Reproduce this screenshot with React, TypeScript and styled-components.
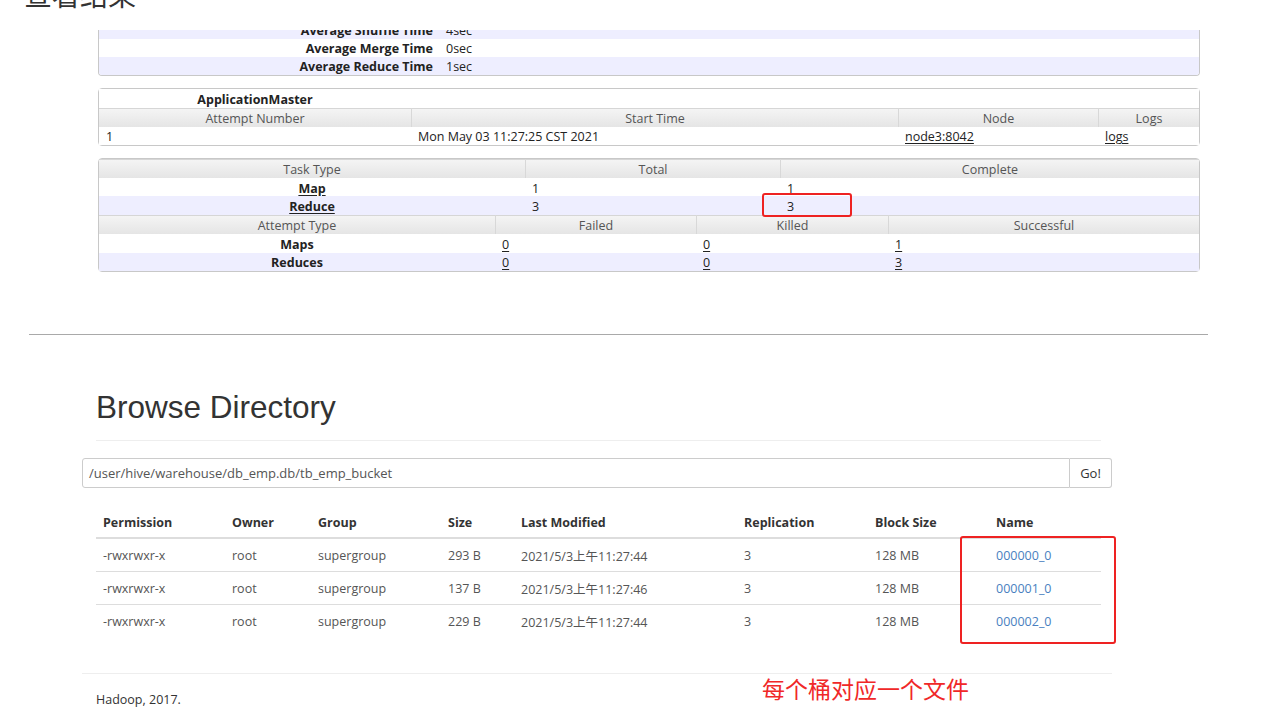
import React from "react";
import styled, { createGlobalStyle } from "styled-components";

const GlobalStyle = createGlobalStyle`
  *, *::before, *::after {
    box-sizing: border-box;
  }
  html, body {
    margin: 0;
    padding: 0;
    background: #fff;
  }
  body {
    font-family: "Open Sans", "Noto Sans", "Noto Sans CJK SC", sans-serif;
    color: #222;
  }
`;

const Page = styled.div`
  width: 1274px;
  height: 726px;
  overflow: hidden;
  position: relative;
`;

const TitleClip = styled.div`
  height: 9px;
  overflow: hidden;
  display: flex;
  align-items: flex-end;
  padding-left: 24px;
`;

const Title = styled.div`
  font-family: "Noto Sans CJK SC", sans-serif;
  font-size: 28px;
  line-height: 28px;
  color: #333;
  margin-bottom: 1px;
`;

/* ---------- hadoop job tables ---------- */

const JobArea = styled.div`
  padding-left: 98px;
  width: 1200px;
  display: flex;
  flex-direction: column;
`;

const SummaryClip = styled.div`
  margin-top: 21px;
  height: 46px;
  overflow: hidden;
  border: 1px solid #c8c8c8;
  border-top: none;
  border-radius: 0 0 4px 4px;
`;

const SummaryInner = styled.div`
  margin-top: -9px;
`;

const Grid = styled.div<{ cols: string; alt?: boolean; h?: number; pt?: number }>`
  display: grid;
  grid-template-columns: ${({ cols }) => cols};
  height: ${({ h = 19 }) => h}px;
  font-size: 12.5px;
  background: ${({ alt }) => (alt ? "#eeeeff" : "#fff")};

  & > * {
    padding-top: ${({ pt = 3 }) => pt}px;
    line-height: ${({ h = 19, pt = 3 }) => h - pt}px;
  }
`;

const Label = styled.div`
  font-weight: 700;
  text-align: right;
  padding-right: 6px;
  color: #222;
`;

const Value = styled.div`
  padding-left: 7px;
  color: #222;
`;

const Box = styled.div<{ top: number }>`
  margin-top: ${({ top }) => top}px;
  border: 1px solid #c8c8c8;
  border-radius: 4px;
  position: relative;
`;

const HeadRow = styled(Grid)`
  background: linear-gradient(#f5f5f5, #e5e5e5);
  box-shadow: inset 0 1px 0 #d6d6d6;
  color: #555;
`;

const HeadCell = styled.div`
  text-align: center;
  border-left: 1px solid #d8d8d8;
  &:first-child {
    border-left: none;
  }
`;

const Cell = styled.div<{ center?: boolean; bold?: boolean }>`
  text-align: ${({ center }) => (center ? "center" : "left")};
  padding-left: ${({ center }) => (center ? 0 : 7)}px;
  font-weight: ${({ bold }) => (bold ? 700 : 400)};
  color: #222;
  white-space: nowrap;
`;

const U = styled.span`
  text-decoration: underline;
  text-underline-offset: 2px;
`;

const RedMark = styled.div`
  position: absolute;
  border: 2px solid #ee2222;
  border-radius: 3px;
`;

/* ---------- browse directory ---------- */

const Rule = styled.div`
  margin: 62px 0 0 29px;
  width: 1179px;
  height: 1px;
  background: #a9a9a9;
`;

const Browse = styled.div`
  position: relative;
  padding: 54px 0 0 82px;
  width: 1112px;
`;

const H1 = styled.h1`
  margin: 0 0 0 14px;
  font-family: "Liberation Sans", Arial, sans-serif;
  font-weight: 400;
  font-size: 31.5px;
  line-height: 36px;
  color: #333;
  width: 1005px;
  padding-bottom: 15px;
  border-bottom: 1px solid #eee;
`;

const PathBar = styled.div`
  margin-top: 17px;
  display: flex;
  height: 30px;
`;

const PathInput = styled.div`
  flex: 1;
  border: 1px solid #ccc;
  border-radius: 3px 0 0 3px;
  padding-left: 6px;
  font-size: 13px;
  line-height: 28px;
  color: #555;
`;

const GoButton = styled.div`
  width: 42px;
  border: 1px solid #ccc;
  border-left: none;
  border-radius: 0 3px 3px 0;
  text-align: center;
  font-size: 13px;
  line-height: 28px;
  color: #333;
`;

const Table = styled.div`
  margin: 19px 0 0 14px;
  width: 1005px;
`;

const COLS = "129px 86px 130px 73px 223px 131px 121px 112px";

const TRow = styled.div<{ head?: boolean; last?: boolean }>`
  display: grid;
  grid-template-columns: ${COLS};
  height: ${({ head }) => (head ? 32 : 33)}px;
  align-items: center;
  border-bottom: ${({ head, last }) =>
    head ? "2px solid #ddd" : last ? "none" : "1px solid #ddd"};
  font-size: 12.5px;
  font-weight: ${({ head }) => (head ? 700 : 400)};
  color: ${({ head }) => (head ? "#333" : "#555")};
`;

const TCell = styled.div`
  padding-left: 7px;
  white-space: nowrap;
`;

const Link = styled.span`
  color: #4a7fc0;
`;

const FooterRule = styled.div`
  margin-top: 35px;
  height: 1px;
  background: #eee;
`;

const Footer = styled.div`
  margin: 17px 0 0 14px;
  font-size: 12.5px;
  color: #333;
`;

const Note = styled.div`
  position: absolute;
  left: 762px;
  top: 337px;
  font-family: "Noto Sans CJK SC", sans-serif;
  font-size: 23px;
  line-height: 32px;
  color: #f02828;
  white-space: nowrap;
`;

const files = [
  { size: "293 B", time: "2021/5/3上午11:27:44", name: "000000_0" },
  { size: "137 B", time: "2021/5/3上午11:27:46", name: "000001_0" },
  { size: "229 B", time: "2021/5/3上午11:27:44", name: "000002_0" },
];

const AM_COLS = "312px 487px 200px 1fr";
const TASK_COLS = "426px 255px 1fr";
const ATT_COLS = "396px 201px 192px 1fr";
const SUM_COLS = "340px 1fr";

export default function App() {
  return (
    <Page>
      <GlobalStyle />
      <TitleClip>
        <Title>查看结果</Title>
      </TitleClip>

      <JobArea>
        <SummaryClip>
          <SummaryInner>
            <Grid cols={SUM_COLS} h={18} pt={1} alt>
              <Label>Average Shuffle Time</Label>
              <Value>4sec</Value>
            </Grid>
            <Grid cols={SUM_COLS} h={18} pt={1}>
              <Label>Average Merge Time</Label>
              <Value>0sec</Value>
            </Grid>
            <Grid cols={SUM_COLS} h={18} pt={1} alt>
              <Label>Average Reduce Time</Label>
              <Value>1sec</Value>
            </Grid>
          </SummaryInner>
        </SummaryClip>

        <Box top={12}>
          <Grid cols={AM_COLS}>
            <Cell center bold>
              ApplicationMaster
            </Cell>
          </Grid>
          <HeadRow cols={AM_COLS}>
            <HeadCell>Attempt Number</HeadCell>
            <HeadCell>Start Time</HeadCell>
            <HeadCell>Node</HeadCell>
            <HeadCell>Logs</HeadCell>
          </HeadRow>
          <Grid cols={AM_COLS} h={18} pt={2}>
            <Cell>1</Cell>
            <Cell>Mon May 03 11:27:25 CST 2021</Cell>
            <Cell>
              <U>node3:8042</U>
            </Cell>
            <Cell>
              <U>logs</U>
            </Cell>
          </Grid>
        </Box>

        <Box top={12}>
          <HeadRow cols={TASK_COLS}>
            <HeadCell>Task Type</HeadCell>
            <HeadCell>Total</HeadCell>
            <HeadCell>Complete</HeadCell>
          </HeadRow>
          <Grid cols={TASK_COLS} h={18}>
            <Cell center bold>
              <U>Map</U>
            </Cell>
            <Cell>1</Cell>
            <Cell>1</Cell>
          </Grid>
          <Grid cols={TASK_COLS} alt>
            <Cell center bold>
              <U>Reduce</U>
            </Cell>
            <Cell>3</Cell>
            <Cell>3</Cell>
          </Grid>
          <HeadRow cols={ATT_COLS}>
            <HeadCell>Attempt Type</HeadCell>
            <HeadCell>Failed</HeadCell>
            <HeadCell>Killed</HeadCell>
            <HeadCell>Successful</HeadCell>
          </HeadRow>
          <Grid cols={ATT_COLS}>
            <Cell center bold>
              Maps
            </Cell>
            <Cell>
              <U>0</U>
            </Cell>
            <Cell>
              <U>0</U>
            </Cell>
            <Cell>
              <U>1</U>
            </Cell>
          </Grid>
          <Grid cols={ATT_COLS} h={18} pt={2} alt>
            <Cell center bold>
              Reduces
            </Cell>
            <Cell>
              <U>0</U>
            </Cell>
            <Cell>
              <U>0</U>
            </Cell>
            <Cell>
              <U>3</U>
            </Cell>
          </Grid>
          <RedMark style={{ left: 663, top: 34, width: 90, height: 24 }} />
        </Box>
      </JobArea>

      <Rule />

      <Browse>
        <H1>Browse Directory</H1>
        <PathBar>
          <PathInput>/user/hive/warehouse/db_emp.db/tb_emp_bucket</PathInput>
          <GoButton>Go!</GoButton>
        </PathBar>
        <Table>
          <TRow head>
            <TCell>Permission</TCell>
            <TCell>Owner</TCell>
            <TCell>Group</TCell>
            <TCell>Size</TCell>
            <TCell>Last Modified</TCell>
            <TCell>Replication</TCell>
            <TCell>Block Size</TCell>
            <TCell>Name</TCell>
          </TRow>
          {files.map((f, i) => (
            <TRow key={f.name} last={i === files.length - 1}>
              <TCell>-rwxrwxr-x</TCell>
              <TCell>root</TCell>
              <TCell>supergroup</TCell>
              <TCell>{f.size}</TCell>
              <TCell>{f.time}</TCell>
              <TCell>3</TCell>
              <TCell>128 MB</TCell>
              <TCell>
                <Link>{f.name}</Link>
              </TCell>
            </TRow>
          ))}
        </Table>
        <FooterRule />
        <Footer>Hadoop, 2017.</Footer>
        <RedMark style={{ left: 960, top: 201, width: 156, height: 108 }} />
        <Note>每个桶对应一个文件</Note>
      </Browse>
    </Page>
  );
}
